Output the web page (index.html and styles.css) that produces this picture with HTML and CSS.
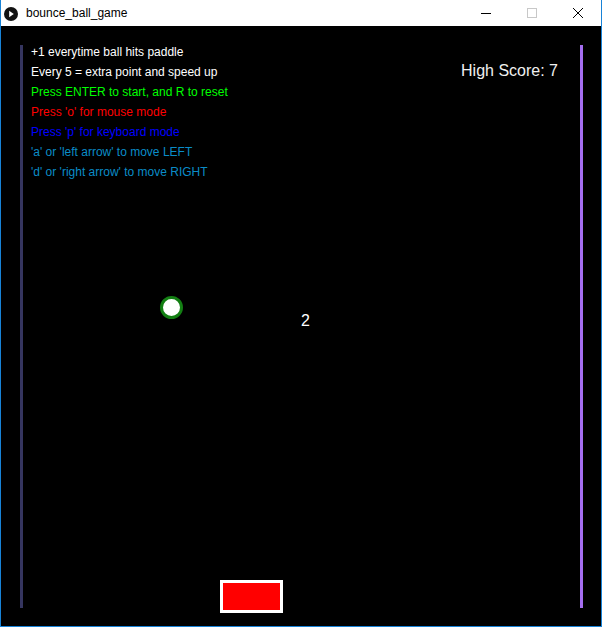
FILE: index.html
```html
<!DOCTYPE html>
<html>
<head>
<meta charset="utf-8">
<link rel="stylesheet" href="styles.css">
</head>
<body>
<div class="window">
  <div class="titlebar">
    <svg class="app-icon" width="16" height="16" viewBox="0 0 16 16">
      <circle cx="8" cy="8" r="7" fill="#111"/>
      <path d="M6.2 4.8 L10.8 8 L6.2 11.2 Z" fill="#fff"/>
    </svg>
    <span class="title">bounce_ball_game</span>
    <div class="controls">
      <div class="ctl"><svg width="10" height="10" viewBox="0 0 10 10"><path d="M0 5.5 H10" stroke="#000" stroke-width="1"/></svg></div>
      <div class="ctl"><svg width="10" height="10" viewBox="0 0 10 10"><rect x="0.5" y="0.5" width="9" height="9" fill="none" stroke="#c8c8c8" stroke-width="1"/></svg></div>
      <div class="ctl"><svg width="10" height="10" viewBox="0 0 10 10"><path d="M0 0 L10 10 M10 0 L0 10" stroke="#000" stroke-width="1"/></svg></div>
    </div>
  </div>
  <div class="canvas">
    <div class="wall wall-left"></div>
    <div class="help">
      <div class="white">+1 everytime ball hits paddle</div>
      <div class="white">Every 5 = extra point and speed up</div>
      <div class="green">Press ENTER to start, and R to reset</div>
      <div class="red">Press 'o' for mouse mode</div>
      <div class="blue">Press 'p' for keyboard mode</div>
      <div class="teal">'a' or 'left arrow' to move LEFT</div>
      <div class="teal">'d' or 'right arrow' to move RIGHT</div>
    </div>
    <div class="high">High Score: 7</div>
    <div class="wall wall-right"></div>
    <div class="ball"></div>
    <div class="score">2</div>
    <div class="paddle"></div>
  </div>
</div>
</body>
</html>
```
FILE: styles.css
```css
html, body {
  margin: 0;
  padding: 0;
  background: #fff;
}
.window {
  width: 602px;
  height: 627px;
  box-sizing: border-box;
  border-left: 1px solid #1883d7;
  border-right: 1px solid #1883d7;
  border-bottom: 1px solid #1883d7;
  display: flex;
  flex-direction: column;
  background: #fff;
}
.titlebar {
  height: 26px;
  flex: none;
  display: flex;
  align-items: center;
  background: #fff;
  font-family: "Liberation Sans", Arial, sans-serif;
  font-size: 12px;
  color: #000;
}
.app-icon {
  margin-left: 2px;
  margin-right: 7px;
  margin-top: 1px;
}
.controls {
  margin-left: auto;
  display: flex;
  height: 26px;
}
.ctl {
  width: 46px;
  height: 26px;
  display: flex;
  align-items: center;
  justify-content: center;
}
.canvas {
  position: relative;
  width: 600px;
  height: 600px;
  box-sizing: border-box;
  background: #000;
  display: flex;
  align-items: flex-start;
  padding: 16px 18px 0 19px;
  font-family: "Liberation Sans", Arial, sans-serif;
}
.wall {
  width: 3px;
  height: 563px;
  margin-top: 3px;
  flex: none;
}
.wall-left {
  background: #35355f;
}
.wall-right {
  background: #a56ef0;
}
.help {
  margin-left: 8px;
  font-size: 12px;
  line-height: 20px;
  white-space: nowrap;
}
.white { color: #ffffff; }
.green { color: #00ff00; }
.red { color: #ff0000; }
.blue { color: #0000ff; }
.teal { color: #0a8cc8; }
.high {
  margin-left: auto;
  margin-right: 22px;
  margin-top: 19px;
  font-size: 16px;
  line-height: 19px;
  color: #f0f0f0;
  white-space: nowrap;
}
.ball {
  position: absolute;
  left: 159px;
  top: 270px;
  width: 23px;
  height: 23px;
  box-sizing: border-box;
  border: 3px solid #137f13;
  border-radius: 50%;
  background: #fff;
}
.score {
  position: absolute;
  left: 300px;
  top: 287px;
  font-size: 16px;
  line-height: 16px;
  color: #fff;
}
.paddle {
  position: absolute;
  left: 219px;
  top: 554px;
  width: 63px;
  height: 33px;
  box-sizing: border-box;
  border: 3px solid #fff;
  background: #ff0000;
}
```
